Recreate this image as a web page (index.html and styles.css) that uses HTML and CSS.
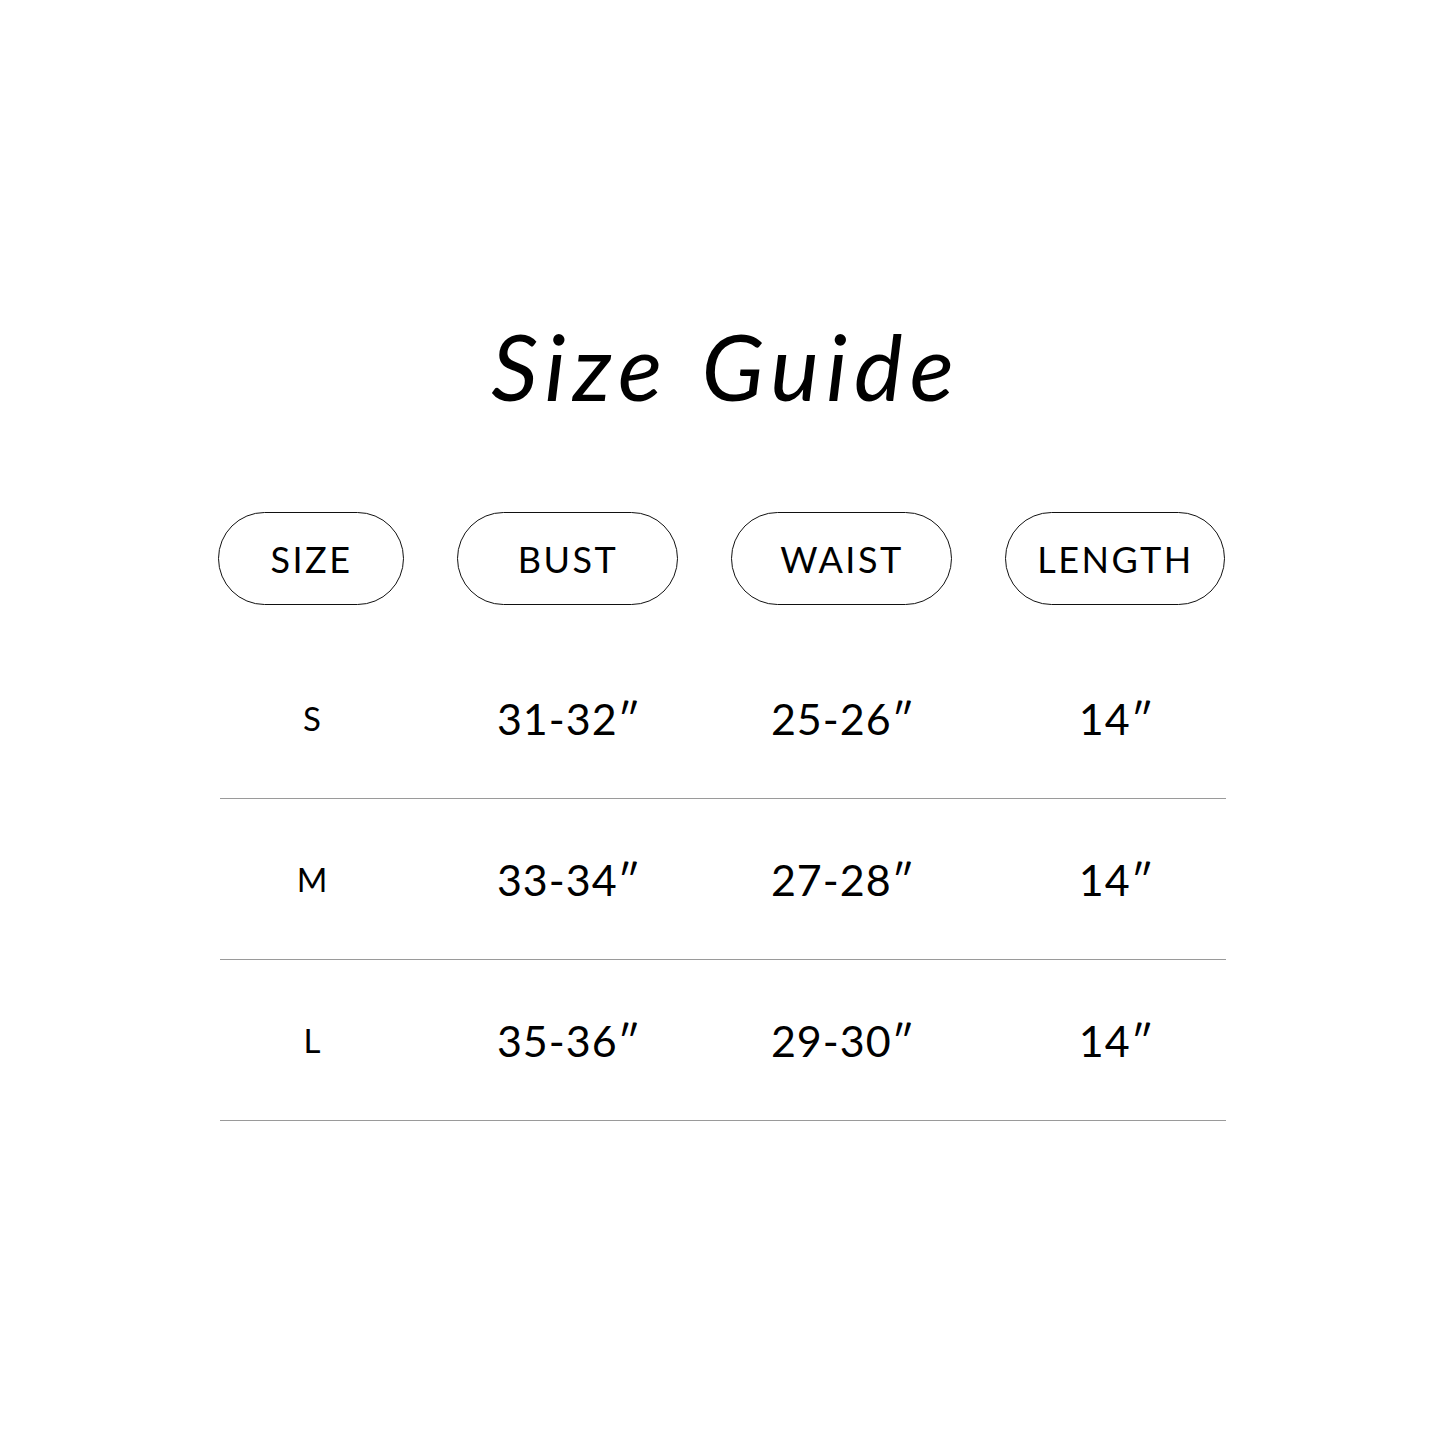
FILE: index.html
```html
<!DOCTYPE html>
<html lang="en">
<head>
<meta charset="utf-8">
<title>Size Guide</title>
<link rel="stylesheet" href="styles.css">
</head>
<body>
<main class="page">
  <h1 class="title">Size Guide</h1>
  <div class="chart">
    <div class="head">
      <div class="pill pill-size">SIZE</div>
      <div class="pill">BUST</div>
      <div class="pill">WAIST</div>
      <div class="pill">LENGTH</div>
    </div>
    <div class="row">
      <div class="cell cell-size">S</div>
      <div class="cell">31-32″</div>
      <div class="cell">25-26″</div>
      <div class="cell">14″</div>
    </div>
    <div class="row">
      <div class="cell cell-size">M</div>
      <div class="cell">33-34″</div>
      <div class="cell">27-28″</div>
      <div class="cell">14″</div>
    </div>
    <div class="row">
      <div class="cell cell-size">L</div>
      <div class="cell">35-36″</div>
      <div class="cell">29-30″</div>
      <div class="cell">14″</div>
    </div>
  </div>
</main>
</body>
</html>
```

FILE: styles.css
```css
html, body {
  margin: 0;
  padding: 0;
  background: #ffffff;
}

body {
  font-family: "Lato", "DejaVu Sans", sans-serif;
  color: #000000;
}

.page {
  width: 1445px;
  height: 1445px;
  padding-top: 316px;
  box-sizing: border-box;
  display: flex;
  flex-direction: column;
  align-items: center;
}

.title {
  margin: 0 0 0 7px;
  font-size: 92px;
  line-height: 100px;
  font-style: italic;
  font-weight: 400;
  letter-spacing: 7px;
  word-spacing: 4px;
}

.chart {
  margin-top: 96px;
  width: 1006px;
  display: flex;
  flex-direction: column;
}

.head,
.row {
  display: grid;
  grid-template-columns: 186px 221px 221px 220px;
  column-gap: 53px;
}

.head {
  margin: 0 2px 33px -2px;
}

.pill {
  height: 93px;
  box-sizing: border-box;
  border: 1px solid #111111;
  border-radius: 47px;
  display: flex;
  align-items: center;
  justify-content: center;
  font-size: 36px;
  letter-spacing: 2.5px;
  padding-left: 2px;
}

.row {
  height: 160px;
  border-bottom: 1px solid #9a9a9a;
  align-items: center;
}

.cell {
  text-align: center;
  font-size: 43px;
  letter-spacing: 1px;
}

.cell-size {
  font-size: 33px;
}
```
